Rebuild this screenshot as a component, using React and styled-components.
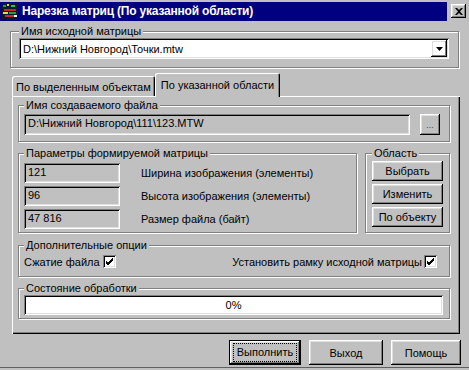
import React from 'react';
import styled, { createGlobalStyle, css } from 'styled-components';

const GlobalStyle = createGlobalStyle`
  html, body {
    margin: 0;
    padding: 0;
    background: #c0c0c0;
  }
  body {
    font-family: "Liberation Sans", Arial, sans-serif;
    font-size: 11px;
    color: #000;
  }
`;

// win98 bevels
const raised = css`
  box-shadow: inset -1px -1px 0 #000, inset 1px 1px 0 #fff,
    inset -2px -2px 0 #808080, inset 2px 2px 0 #dfdfdf;
`;

const sunken = css`
  box-shadow: inset 1px 1px 0 #808080, inset -1px -1px 0 #fff,
    inset 2px 2px 0 #000, inset -2px -2px 0 #dfdfdf;
`;

const Window = styled.div`
  width: 469px;
  height: 368px;
  box-sizing: border-box;
  background: #c0c0c0;
  display: flex;
  flex-direction: column;
  border-bottom: 1px solid #606060;
`;

const TitleBar = styled.div`
  display: flex;
  align-items: center;
  height: 21px;
  padding-top: 1px;
  box-sizing: border-box;
`;

const Caption = styled.div`
  flex: 1;
  height: 19px;
  background: #000080;
  display: flex;
  align-items: center;
  gap: 4px;
  padding-left: 2px;
  color: #fff;
  font-weight: bold;
  font-size: 12px;
  letter-spacing: -0.2px;
`;

const CloseButton = styled.div`
  width: 15px;
  height: 14px;
  margin: 0 3px 0 4px;
  ${raised};
  display: flex;
  align-items: center;
  justify-content: center;
`;

const Body = styled.div`
  flex: 1;
  display: flex;
  flex-direction: column;
  padding: 4px 10px 0 10px;
`;

const Group = styled.fieldset`
  margin: ${p => p.$mt || 0}px 0 0 0;
  padding: ${p => p.$pad};
  border: 1px solid #808080;
  box-shadow: inset 1px 1px 0 #fff, 1px 1px 0 #fff;
  min-inline-size: 0;
  display: flex;
  flex-direction: ${p => p.$row ? 'row' : 'column'};
  gap: ${p => p.$gap || 0}px;
  flex: ${p => p.$grow ? 1 : 'none'};
  width: ${p => p.$w ? p.$w + 'px' : 'auto'};
  box-sizing: border-box;
`;

const Legend = styled.legend`
  padding: 0 2px;
  line-height: 13px;
  background: #c0c0c0;
`;

const Combo = styled.div`
  height: 21px;
  background: #fff;
  ${sunken};
  display: flex;
  align-items: center;
  padding: 0 2px 0 4px;
`;

const FieldText = styled.span`
  flex: 1;
  white-space: nowrap;
`;

const DropButton = styled.div`
  width: 16px;
  height: 17px;
  ${raised};
  display: flex;
  align-items: center;
  justify-content: center;
`;

const TabStrip = styled.div`
  display: flex;
  align-items: flex-end;
  height: 24px;
  margin-top: 4px;
  padding-left: 2px;
  position: relative;
  z-index: 1;
`;

const Tab = styled.div`
  height: ${p => p.$active ? 24 : 20}px;
  margin-bottom: ${p => p.$active ? -1 : 0}px;
  padding: 0 ${p => p.$active ? 6 : 4}px;
  display: flex;
  align-items: center;
  padding-top: ${p => p.$active ? 0 : 1}px;
  box-sizing: border-box;
  background: #c0c0c0;
  border-top-left-radius: 2px;
  border-top-right-radius: 2px;
  box-shadow: inset 1px 1px 0 #fff, inset -1px 0 0 #000, inset -2px 0 0 #808080;
  white-space: nowrap;
`;

const TabPanel = styled.div`
  height: 235px;
  margin: 0 -1px 0 2px;
  padding: 3px 10px 0 6px;
  box-shadow: inset 1px 1px 0 #fff, inset -1px -1px 0 #000, inset -2px -2px 0 #808080;
  display: flex;
  flex-direction: column;
`;

const Row = styled.div`
  display: flex;
  align-items: ${p => p.$align || 'center'};
  gap: ${p => p.$gap || 0}px;
  justify-content: ${p => p.$justify || 'flex-start'};
  height: ${p => p.$h ? p.$h + 'px' : 'auto'};
`;

const ReadField = styled.div`
  width: ${p => p.$w ? p.$w + 'px' : 'auto'};
  flex: ${p => p.$w ? 'none' : 1};
  height: ${p => p.$h || 20}px;
  ${sunken};
  display: flex;
  align-items: ${p => p.$top ? 'flex-start' : 'center'};
  padding: ${p => p.$top ? '3px 4px 0' : '0 4px'};
  box-sizing: border-box;
  white-space: nowrap;
`;

const FieldLabel = styled.span`
  margin-left: 21px;
  white-space: nowrap;
`;

const Button = styled.div`
  width: ${p => p.$w}px;
  height: ${p => p.$h || 20}px;
  ${raised};
  display: flex;
  align-items: center;
  justify-content: center;
  box-sizing: border-box;
  white-space: nowrap;
`;

const DefaultButton = styled(Button)`
  box-shadow: inset 0 0 0 1px #000, inset -2px -2px 0 #000, inset 2px 2px 0 #fff,
    inset -3px -3px 0 #808080, inset 3px 3px 0 #dfdfdf;
`;

const FocusBox = styled.span`
  outline: 1px dotted #000;
  outline-offset: 0;
  padding: 2px 3px;
  line-height: 13px;
`;

const Dots = styled.span`
  font-size: 9px;
  color: #404040;
`;

const CheckBox = styled.span`
  width: 13px;
  height: 13px;
  background: #fff;
  ${sunken};
  display: inline-flex;
  align-items: center;
  justify-content: center;
  flex: none;
`;

const CheckLabel = styled.span`
  display: inline-flex;
  align-items: center;
  gap: ${p => p.$gap || 2}px;
  white-space: nowrap;
`;

const Progress = styled.div`
  height: 20px;
  background: #fff;
  ${sunken};
  display: flex;
  align-items: center;
  justify-content: center;
`;

const Footer = styled.div`
  display: flex;
  justify-content: flex-end;
  gap: 8px;
  margin-top: 6px;
  margin-right: -2px;
`;

const AppIcon = () => (
  <svg width="16" height="16" viewBox="0 0 16 16">
    <rect x="0" y="0" width="16" height="16" fill="#101830" />
    <rect x="1" y="2" width="3" height="2" fill="#20a040" />
    <rect x="5" y="1" width="2" height="2" fill="#e0e020" />
    <rect x="9" y="2" width="4" height="2" fill="#30c050" />
    <rect x="2" y="6" width="12" height="2" fill="#d02020" />
    <rect x="1" y="9" width="5" height="2" fill="#e0e040" />
    <rect x="7" y="9" width="7" height="2" fill="#20a040" />
    <rect x="3" y="12" width="9" height="2" fill="#c03030" />
    <rect x="12" y="12" width="3" height="2" fill="#f0f0f0" />
  </svg>
);

const Check = () => (
  <svg width="9" height="9" viewBox="0 0 9 9">
    <path d="M1 4 L3 6 L8 1 M1 5 L3 7 L8 2 M1 6 L3 8 L8 3" stroke="#000" strokeWidth="1" fill="none" />
  </svg>
);

function App() {
  return (
    <>
      <GlobalStyle />
      <Window>
        <TitleBar>
          <Caption>
            <AppIcon />
            <span>Нарезка матриц (По указанной области)</span>
          </Caption>
          <CloseButton>
            <svg width="8" height="7" viewBox="0 0 8 7">
              <path d="M0 0h2l2 2 2-2h2L5 3.5 8 7H6L4 5 2 7H0l3-3.5z" fill="#000" />
            </svg>
          </CloseButton>
        </TitleBar>
        <Body>
          <Group $pad="0 9px 8px 8px">
            <Legend>Имя исходной матрицы</Legend>
            <Combo>
              <FieldText>D:\Нижний Новгород\Точки.mtw</FieldText>
              <DropButton>
                <svg width="7" height="4" viewBox="0 0 7 4">
                  <path d="M0 0h7L3.5 4z" fill="#000" />
                </svg>
              </DropButton>
            </Combo>
          </Group>

          <TabStrip>
            <Tab>По выделенным объектам</Tab>
            <Tab $active>По указанной области</Tab>
          </TabStrip>
          <TabPanel>
            <Group $pad="2px 9px 6px 5px">
              <Legend>Имя создаваемого файла</Legend>
              <Row $gap={10}>
                <ReadField $h={21} $top>D:\Нижний Новгород\111\123.MTW</ReadField>
                <Button $w={20} $h={21}>
                  <Dots>...</Dots>
                </Button>
              </Row>
            </Group>

            <Row $align="stretch" $gap={8} style={{ marginTop: 5 }}>
              <Group $grow $gap={3} $pad="3px 6px 3px 5px">
                <Legend>Параметры формируемой матрицы</Legend>
                <Row>
                  <ReadField $w={96} $top>121</ReadField>
                  <FieldLabel>Ширина изображения (элементы)</FieldLabel>
                </Row>
                <Row>
                  <ReadField $w={96} $top>96</ReadField>
                  <FieldLabel>Высота изображения (элементы)</FieldLabel>
                </Row>
                <Row>
                  <ReadField $w={96} $top>47 816</ReadField>
                  <FieldLabel>Размер файла (байт)</FieldLabel>
                </Row>
              </Group>
              <Group $w={85} $gap={3} $pad="1px 6px 3px 6px">
                <Legend>Область</Legend>
                <Button $w={71}>Выбрать</Button>
                <Button $w={71}>Изменить</Button>
                <Button $w={71}>По объекту</Button>
              </Group>
            </Row>

            <Group $mt={6} $pad="2px 12px 7px 5px">
              <Legend>Дополнительные опции</Legend>
              <Row $justify="space-between" $h={15}>
                <CheckLabel $gap={3}>
                  Сжатие файла
                  <CheckBox><Check /></CheckBox>
                </CheckLabel>
                <CheckLabel $gap={0}>
                  Установить рамку исходной матрицы
                  <CheckBox><Check /></CheckBox>
                </CheckLabel>
              </Row>
            </Group>

            <Group $mt={5} $pad="0 6px 3px 5px">
              <Legend>Состояние обработки</Legend>
              <Progress>0%</Progress>
            </Group>
          </TabPanel>

          <Footer>
            <DefaultButton $w={72} $h={25}>
              <FocusBox>Выполнить</FocusBox>
            </DefaultButton>
            <Button $w={74} $h={25}>Выход</Button>
            <Button $w={70} $h={25}>Помощь</Button>
          </Footer>
        </Body>
      </Window>
    </>
  );
}

export default App;
